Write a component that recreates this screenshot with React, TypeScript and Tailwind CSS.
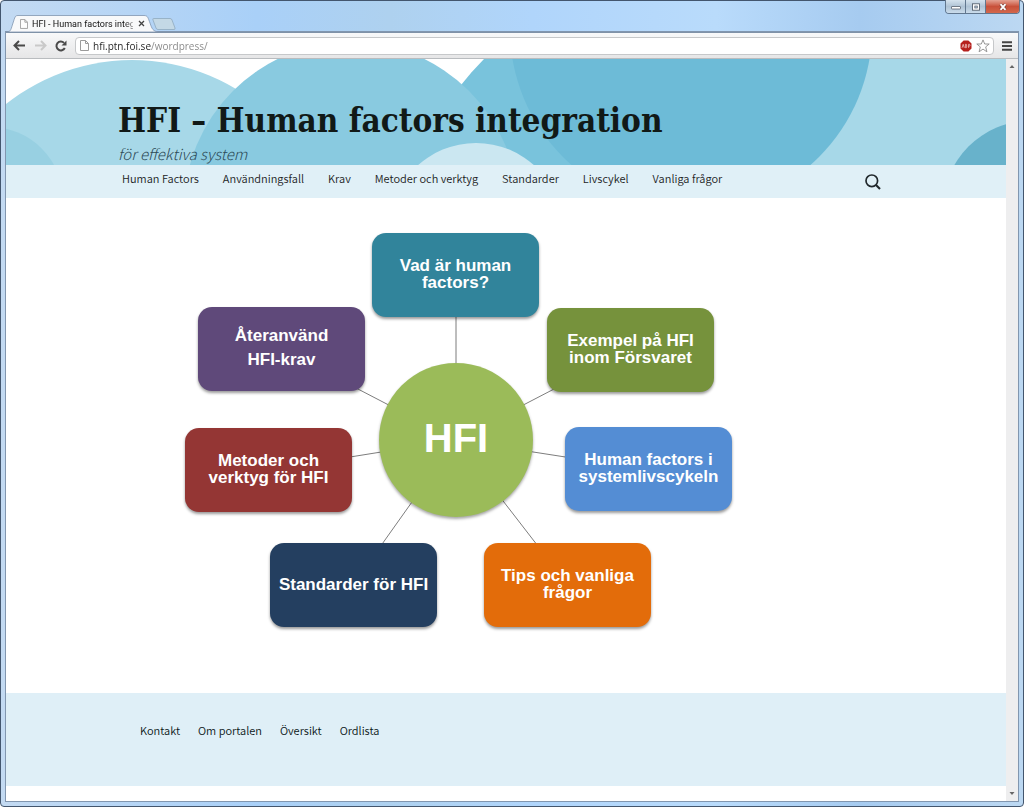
import React from "react";

const UI_FONT = "font-['Open_Sans','Noto_Sans',sans-serif]";
const SITE_FONT = "font-['Noto_Sans_CJK_JP','Noto_Sans_CJK_SC',sans-serif]";

const navItems = [
  "Human Factors",
  "Användningsfall",
  "Krav",
  "Metoder och verktyg",
  "Standarder",
  "Livscykel",
  "Vanliga frågor",
];

const footerItems = ["Kontakt", "Om portalen", "Översikt", "Ordlista"];

const nodes = [
  { lines: ["Vad är human", "factors?"], place: "left-[187px] top-[35px] bg-[#31849b]", leading: "leading-[17px]" },
  { lines: ["Exempel på HFI", "inom Försvaret"], place: "left-[362px] top-[110px] bg-[#76923c]", leading: "leading-[17px]" },
  { lines: ["Human factors i", "systemlivscykeln"], place: "left-[380px] top-[229px] bg-[#548dd4]", leading: "leading-[17px]" },
  { lines: ["Tips och vanliga", "frågor"], place: "left-[299px] top-[345px] bg-[#e36c0a]", leading: "leading-[17px]" },
  { lines: ["Standarder för HFI"], place: "left-[85px] top-[345px] bg-[#243f60]", leading: "leading-[17px]" },
  { lines: ["Metoder och", "verktyg för HFI"], place: "left-0 top-[230px] bg-[#943634]", leading: "leading-[17px]" },
  { lines: ["Återanvänd", "HFI-krav"], place: "left-[13px] top-[109px] bg-[#5f497a]", leading: "leading-6" },
];

function PageIcon({ className }: { className: string }) {
  return (
    <svg viewBox="0 0 9 11" className={className} aria-hidden="true">
      <path d="M.5.5h5l3 3v7h-8z" fill="#fdfdfd" stroke="#9a9a9a" />
      <path d="M5.5.5v3h3" fill="none" stroke="#9a9a9a" />
    </svg>
  );
}

function TitleBar() {
  return (
    <div className="flex h-8 items-end justify-between pl-[7px] pr-[3px]">
      <div className="flex items-end">
        <div className="relative flex h-[17px] w-[150px] items-center pl-3">
          <svg viewBox="0 0 150 17" className="absolute inset-0 h-full w-full" aria-hidden="true">
            <path d="M0 17C3 16 3 14 5 8C7 2 7 .5 10 .5H136C140 .5 140 3 142 8C144 14 145 16 150 17Z" fill="#f8f9fa" stroke="#8096b0" strokeWidth=".8" />
          </svg>
          <PageIcon className="relative h-[10px] w-2" />
          <span className="relative ml-1 w-[101px] whitespace-nowrap font-['Roboto','Noto_Sans',sans-serif] text-[9px] leading-[14px] text-[#111] [mask-image:linear-gradient(to_right,black_92px,transparent_108px)]">
            HFI - Human factors integ
          </span>
          <button aria-label="Stäng flik" className="relative ml-1 h-[9px] w-[9px]">
            <svg viewBox="0 0 9 9" className="h-full w-full">
              <path d="M2 2l5 5M7 2l-5 5" stroke="#444" strokeWidth="1.3" />
            </svg>
          </button>
        </div>
        <button aria-label="Ny flik" className="mb-[2px] -ml-[6px] h-3 w-6">
          <svg viewBox="0 0 24 12" className="h-full w-full">
            <path d="M1.500.5H18Q19.500.5 20 2L23 10Q23.500 11.500 22 11.500H6Q4.500 11.500 4 10L1 2Q.5.5 1.500.5Z" fill="#c4d9e6" stroke="#8fa9be" strokeWidth=".8" />
          </svg>
        </button>
      </div>
      <div className="flex h-[14px] self-start overflow-hidden rounded-b border border-t-0 border-[#61778f]">
        <button aria-label="Minimera" className="flex w-5 items-center justify-center border-r border-[#61778f] bg-linear-to-b from-[#d5e3ee] via-[#afc3d5] to-[#cadceb]">
          <svg viewBox="0 0 10 8" className="h-2 w-[10px]">
            <rect x=".5" y="3.500" width="9" height="2.500" rx=".5" fill="#fff" stroke="#56616e" strokeWidth=".8" />
          </svg>
        </button>
        <button aria-label="Maximera" className="flex w-5 items-center justify-center border-r border-[#61778f] bg-linear-to-b from-[#d5e3ee] via-[#afc3d5] to-[#cadceb]">
          <svg viewBox="0 0 10 8" className="h-2 w-[10px]">
            <rect x="1.500" y=".8" width="7" height="6.400" fill="#fff" stroke="#56616e" strokeWidth=".9" />
            <rect x="3.800" y="3" width="2.500" height="2" fill="#b3c6d7" stroke="#56616e" strokeWidth=".7" />
          </svg>
        </button>
        <button aria-label="Stäng" className="flex w-[33px] items-center justify-center bg-linear-to-b from-[#e3a294] via-[#c8503a] to-[#d3684c]">
          <svg viewBox="0 0 10 8" className="h-2 w-[10px]">
            <path d="M2.500 1.200l5 5.600M7.500 1.200l-5 5.600" stroke="#6d3a35" strokeWidth="3" />
            <path d="M2.500 1.200l5 5.600M7.500 1.200l-5 5.600" stroke="#fff" strokeWidth="1.900" />
          </svg>
        </button>
      </div>
    </div>
  );
}

function Toolbar() {
  return (
    <div className="flex h-[27px] items-center border-b border-b-[#b9bcbf] border-t border-t-[#7f92a8] bg-linear-to-b from-[#f8f9fa] to-[#e6e6e7] pl-[7px] pr-[6px]">
      <button aria-label="Bakåt" className="h-[11px] w-[13px]">
        <svg viewBox="0 0 13 11" className="h-full w-full">
          <path d="M6 1L1.500 5.500L6 10M2 5.500H12" fill="none" stroke="#4a4a4a" strokeWidth="2" />
        </svg>
      </button>
      <button aria-label="Framåt" className="ml-2 h-[11px] w-[13px]">
        <svg viewBox="0 0 13 11" className="h-full w-full">
          <path d="M7 1L11.500 5.500L7 10M11 5.500H1" fill="none" stroke="#c9c9c9" strokeWidth="2" />
        </svg>
      </button>
      <button aria-label="Ladda om" className="ml-2 h-3 w-3">
        <svg viewBox="0 0 12 12" className="h-full w-full">
          <path d="M9.800 8A4.400 4.400 0 1 1 9 2.900" fill="none" stroke="#4a4a4a" strokeWidth="2" />
          <path d="M11.500.5V5.500H6.500Z" fill="#4a4a4a" />
        </svg>
      </button>
      <div className="ml-2 flex h-[18px] min-w-0 flex-1 items-center rounded-sm border border-[#c6c8ca] bg-white pl-1 pr-[3px]">
        <PageIcon className="h-[11px] w-[9px] shrink-0" />
        <input
          aria-label="Adress"
          defaultValue="hfi.ptn.foi.se/wordpress/"
          className="ml-1 h-4 min-w-0 flex-1 bg-[linear-gradient(to_right,#222_58px,#858585_58px)] bg-clip-text text-[10px] leading-4 text-transparent caret-[#333] outline-none"
        />
        <svg viewBox="0 0 12 12" className="h-3 w-3 shrink-0" aria-hidden="true">
          <path d="M3.600.5H8.400L11.500 3.600V8.400L8.400 11.500H3.600L.5 8.400V3.600Z" fill="#b5201d" />
          <path d="M2 7.800L3.200 4.300L4.300 7.800M5.400 4.300V7.700H6.300Q7.500 6.900 6.300 6Q7.500 4.900 6.300 4.300ZM8.600 7.900V4.300H9.500Q10.600 5.200 9.500 6.200H8.600" fill="none" stroke="#f0c5c3" strokeWidth=".8" />
        </svg>
        <button aria-label="Bokmärk sidan" className="ml-1 h-[14px] w-[14px] shrink-0">
          <svg viewBox="0 0 14 14" className="h-full w-full">
            <path d="M7 .9L8.700 5H13.200L9.700 7.900L10.900 12.800L7 10.100L3.100 12.800L4.300 7.900L.8 5H5.300Z" fill="#fff" stroke="#8d8d8d" strokeWidth=".9" />
          </svg>
        </button>
      </div>
      <button aria-label="Meny" className="ml-2 h-[10px] w-[10px]">
        <svg viewBox="0 0 10 10" className="h-full w-full">
          <path d="M0 1.200H10M0 5H10M0 8.800H10" stroke="#454545" strokeWidth="2" />
        </svg>
      </button>
    </div>
  );
}

function HeaderArt() {
  return (
    <svg viewBox="0 0 1000 106" preserveAspectRatio="xMinYMin slice" className="absolute inset-0 h-full w-full" aria-hidden="true">
      <rect width="1000" height="106" fill="#fff" />
      <rect x="686" width="314" height="106" fill="#a7d8e8" />
      <circle cx="126" cy="203" r="202" fill="#a7d8e8" />
      <circle cx="-16" cy="141" r="73" fill="#98d0e2" />
      <path d="M478 0Q466 12 455 26L440 106H686V0Z" fill="#79c3dc" />
      <circle cx="345" cy="150" r="167" fill="#89cae0" />
      <circle cx="685" cy="-30" r="181" fill="#6dbbd7" />
      <circle cx="470" cy="171" r="87" fill="#cbe7f1" />
      <circle cx="1024" cy="149" r="87" fill="#68b2cb" />
    </svg>
  );
}

function Diagram() {
  return (
    <div className="relative ml-[179px] h-[495px] w-[547px] font-['Liberation_Sans',Arial,sans-serif] font-bold text-white">
      <svg viewBox="0 0 547 495" className="absolute inset-0 h-full w-full" aria-hidden="true">
        <path d="M271 242V76M271 242L446 151M271 242L464 272M271 242L383 387M271 242L168 387M271 242L84 272M271 242L96 151" fill="none" stroke="#7d7d7d" />
      </svg>
      <div className="absolute left-[194px] top-[165px] flex h-[154px] w-[154px] items-center justify-center rounded-full bg-[#9bbb59] pb-1 text-[40px] leading-10 shadow-[0_2px_3px_rgba(0,0,0,0.35)]">
        HFI
      </div>
      {nodes.map((n) => (
        <a
          key={n.lines[0]}
          href="#"
          className={`absolute flex h-[84px] w-[167px] flex-col items-center justify-center whitespace-nowrap rounded-[14px] pb-0.5 text-[17px] shadow-[0_2px_3px_rgba(0,0,0,0.4)] ${n.leading} ${n.place}`}
        >
          {n.lines.map((l) => (
            <span key={l}>{l}</span>
          ))}
        </a>
      ))}
    </div>
  );
}

function Site() {
  return (
    <div className={`flex min-w-0 flex-1 flex-col bg-white ${SITE_FONT}`}>
      <header className="relative h-[106px] overflow-hidden pl-28 pt-[42px]">
        <HeaderArt />
        <h1 className="relative whitespace-nowrap font-['DejaVu_Serif_Condensed','DejaVu_Serif',serif] text-[33px] font-bold leading-10 text-[#111917]">
          HFI – Human factors integration
        </h1>
        <p className="relative whitespace-nowrap text-[15px] font-light italic leading-[26px] text-[#2d4a57]">för effektiva system</p>
      </header>
      <nav className="flex h-[33px] justify-between bg-[#e0f0f7] pl-[116px] pr-[125px] pt-[3px]">
        <ul className="flex gap-6 whitespace-nowrap text-[11px] font-[350] leading-5 text-[#1c2324]">
          {navItems.map((t) => (
            <li key={t}>
              <a href="#">{t}</a>
            </li>
          ))}
        </ul>
        <button aria-label="Sök" className="mt-[6px] h-4 w-4">
          <svg viewBox="0 0 16 16" className="h-full w-full">
            <circle cx="6.800" cy="6.800" r="5.800" fill="none" stroke="#20282c" strokeWidth="1.700" />
            <path d="M11 11L15 15" stroke="#20282c" strokeWidth="2.200" />
          </svg>
        </button>
      </nav>
      <main className="flex-1">
        <Diagram />
      </main>
      <footer className="mb-[15px] h-[93px] bg-[#dfeff7] pl-[134px] pt-[27px]">
        <ul className="flex gap-[18px] whitespace-nowrap text-[11px] font-[350] leading-5 text-[#0c1718]">
          {footerItems.map((t) => (
            <li key={t}>
              <a href="#">{t}</a>
            </li>
          ))}
        </ul>
      </footer>
    </div>
  );
}

export default function App() {
  return (
    <div className={`flex min-h-screen flex-col rounded border border-[#43566e] bg-[linear-gradient(to_right,#c3daf2,#a9d0f8_25%,#aed1ef_38%,#b0d5fb_52%,#b9dbfb_70%,#a6cbf0_84%,#bcd8f2)] ${UI_FONT}`}>
      <div className="-mt-px">
        <TitleBar />
      </div>
      <div className="mx-[5px] mb-[5px] flex flex-1 flex-col outline outline-[#8196af]">
        <Toolbar />
        <div className="flex flex-1">
          <Site />
          <div className="flex w-3 flex-col items-center justify-between bg-[#eeeeef] py-1">
            <svg viewBox="0 0 6 6" className="h-[6px] w-[6px]" aria-hidden="true">
              <path d="M.5 5L3 2L5.500 5Z" fill="#666" />
            </svg>
            <svg viewBox="0 0 6 6" className="h-[6px] w-[6px]" aria-hidden="true">
              <path d="M.5 1L3 4L5.500 1Z" fill="#666" />
            </svg>
          </div>
        </div>
      </div>
    </div>
  );
}
